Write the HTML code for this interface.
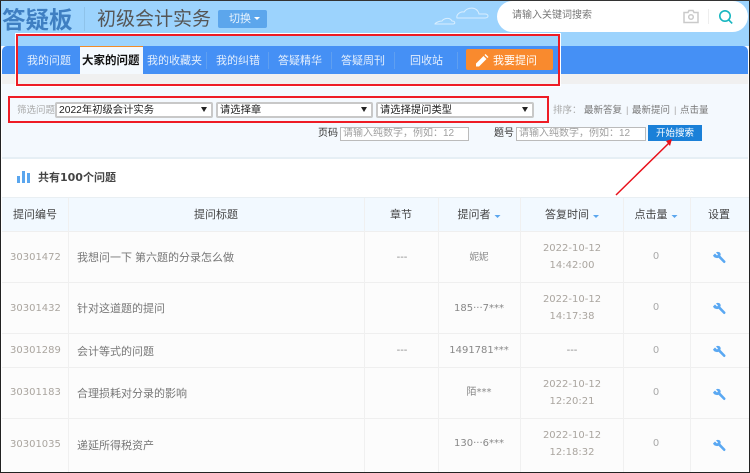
<!DOCTYPE html>
<html lang="zh"><head><meta charset="utf-8"><style>
*{box-sizing:border-box;margin:0;padding:0}
html,body{width:750px;height:473px;overflow:hidden;background:#fff}
body{position:relative;font-family:"Liberation Sans","Noto Sans CJK SC",sans-serif;font-size:11px;color:#555}
.a{position:absolute;white-space:nowrap}
.nav{top:53px;font-size:11px;color:#e4effd;line-height:16px}
.sep{position:absolute;top:52px;width:1px;height:17px;background:#5f9ff0}
.sel{position:absolute;top:102px;height:16px;background:#fff;border:2px solid #c8c8c8;border-radius:2px;color:#222;font-size:10.3px;line-height:13px;padding-left:2px;white-space:nowrap}
.sel i{position:absolute;right:4px;top:3px;width:0;height:0;border-left:3px solid transparent;border-right:3px solid transparent;border-top:5px solid #222}
.inp{position:absolute;top:127px;height:14px;background:#fff;border:1px solid #bbb;color:#a0a0a0;font-size:10px;line-height:12px;padding-left:2px;white-space:nowrap;overflow:hidden}
.hl{position:absolute;left:2px;width:747px;height:1px;background:#efefef}
.vl{position:absolute;top:198px;width:1px;height:274px;background:#f0f0f0}
.th{position:absolute;top:207px;font-size:11px;color:#444;line-height:16px;white-space:nowrap;text-align:center;transform:translateX(-50%)}
.th i{display:inline-block;width:0;height:0;border-left:3px solid transparent;border-right:3px solid transparent;border-top:3px solid #5aa6ee;margin-left:4px;vertical-align:0}
.id{left:10px;color:#aaa59f;font-family:"DejaVu Sans",sans-serif;font-size:10px;position:absolute;line-height:14px}
.tt{left:77px;color:#777;font-size:11px;position:absolute;line-height:16px;white-space:nowrap}
.m{position:absolute;color:#888;font-family:"DejaVu Sans","Noto Sans CJK SC",sans-serif;font-size:10px;line-height:14px;white-space:nowrap;text-align:center;transform:translateX(-50%)}
.d{position:absolute;left:572px;transform:translateX(-50%);color:#aaa59f;font-family:"DejaVu Sans",sans-serif;font-size:10px;line-height:17px;text-align:center;white-space:nowrap}
.z{position:absolute;left:656px;transform:translateX(-50%);color:#aaa;font-family:"DejaVu Sans",sans-serif;font-size:10px;line-height:14px}
.w{position:absolute;left:712px;width:14px;height:14px}
.s{position:absolute;top:104px;font-size:9.5px;line-height:14px;color:#777;white-space:nowrap}
</style></head><body>
<div class="a" style="left:0;top:0;width:750px;height:46px;background:#9cd3fd"></div>
<div class="a" style="left:2px;top:46px;width:746px;height:28px;background:#4590f5;border-radius:5px 5px 0 0"></div>
<div class="a" style="left:2px;top:74px;width:746px;height:10px;background:#f0f0f0"></div>
<div class="a" style="left:2px;top:84px;width:746px;height:73px;background:#f4f9fe"></div>
<div class="a" style="left:2px;top:157px;width:746px;height:2px;background:#e6eff5"></div>

<div class="a" style="left:2px;top:4px;font-size:23.5px;font-weight:bold;color:#3f7fc2;line-height:32px">答疑板</div>
<div class="a" style="left:84px;top:7px;width:1px;height:24px;background:#8fc3ea"></div>
<div class="a" style="left:97px;top:7px;font-size:19px;color:#555;line-height:26px">初级会计实务</div>
<div class="a" style="left:218px;top:10px;width:49px;height:18px;background:#5ca6ec;border-radius:2px;color:#e8f3fd;font-size:11px;line-height:18px;padding-left:11px">切换<span style="display:inline-block;width:0;height:0;border-left:3px solid transparent;border-right:3px solid transparent;border-top:3px solid #fff;margin-left:3px;vertical-align:2px"></span></div>

<svg class="a" style="left:430px;top:5px" width="90" height="24" viewBox="0 0 90 24" fill="none" stroke="#d8eefe" stroke-width="1"><path d="M27 13h28c4 0 4-4 0-4h-6c-2-8-12-7-15-2-4-1-8 3-7 6z"/><path d="M5 19h18c3 0 2-3-1-3-2-4-8-3-10 0-3 0-7 2-7 3z"/></svg>

<div class="a" style="left:497px;top:1px;width:251px;height:31px;background:#fff;border-radius:16px"></div>
<div class="a" style="left:512px;top:8px;font-size:10px;color:#777;line-height:16px">请输入关键词搜索</div>
<svg class="a" style="left:683px;top:9px" width="16" height="15" viewBox="0 0 16 15" fill="none" stroke="#cacaca" stroke-width="1.5"><path d="M1 3.500h4l1-2h4l1 2h4v10H1z"/><circle cx="8" cy="8" r="2.300"/></svg>
<div class="a" style="left:708px;top:9px;width:1px;height:15px;background:#eee"></div>
<svg class="a" style="left:718px;top:9px" width="16" height="16" viewBox="0 0 16 16" fill="none" stroke="#17b6c0" stroke-width="1.6"><circle cx="7" cy="7" r="5.200"/><path d="M10.800 11l3.400 3.400"/></svg>

<div class="a" style="left:80px;top:46px;width:63px;height:28px;background:#f4f9fe;border-top:1px solid #f28c28"></div>
<div class="a nav" style="left:27px">我的问题</div>
<div class="a nav" style="left:82px;color:#111;font-weight:bold;font-size:11.5px">大家的问题</div>
<div class="a nav" style="left:147px">我的收藏夹</div>
<div class="sep" style="left:206px"></div>
<div class="a nav" style="left:216px">我的纠错</div>
<div class="sep" style="left:268px"></div>
<div class="a nav" style="left:278px">答疑精华</div>
<div class="sep" style="left:331px"></div>
<div class="a nav" style="left:341px">答疑周刊</div>
<div class="sep" style="left:394px"></div>
<div class="a nav" style="left:410px">回收站</div>
<div class="sep" style="left:457px"></div>
<div class="a" style="left:466px;top:49px;width:87px;height:21px;background:#f98a2e;border-radius:2px"></div>
<svg class="a" style="left:475px;top:53px" width="14" height="14" viewBox="0 0 14 14" fill="#fff"><path d="M1 10.500L8.500 3l3 3L4 13.500H1zM9.500 2l1-1 3 3-1 1z"/></svg>
<div class="a" style="left:493px;top:53px;font-size:11px;color:#fff;line-height:16px">我要提问</div>

<div class="a" style="left:15px;top:33px;width:546px;height:54px;border:1px solid #fff"></div>
<div class="a" style="left:16px;top:34px;width:544px;height:52px;border:2px solid #ee1c25"></div>

<div class="a" style="left:8px;top:96px;width:541px;height:27px;border:2px solid #ee1c25"></div>
<div class="a" style="left:17px;top:104px;color:#aaa;font-size:9.500px;line-height:14px">筛选问题</div>
<div class="sel" style="left:55px;width:158px">2022年初级会计实务<i></i></div>
<div class="sel" style="left:216px;width:157px">请选择章<i></i></div>
<div class="sel" style="left:376px;width:158px">请选择提问类型<i></i></div>
<div class="s" style="left:553px;color:#aaa">排序：</div>
<div class="s" style="left:584px">最新答复</div>
<div class="s" style="left:626px;color:#aaa">|</div>
<div class="s" style="left:632px">最新提问</div>
<div class="s" style="left:674px;color:#aaa">|</div>
<div class="s" style="left:680px">点击量</div>
<div class="a" style="left:318px;top:126px;color:#333;font-size:10px;line-height:15px">页码</div>
<div class="inp" style="left:340px;width:129px">请输入纯数字，例如：12</div>
<div class="a" style="left:494px;top:126px;color:#333;font-size:10px;line-height:15px">题号</div>
<div class="inp" style="left:516px;width:130px">请输入纯数字，例如：12</div>
<div class="a" style="left:648px;top:125px;width:54px;height:16px;background:#1a80d8;color:#fff;font-size:9.500px;line-height:17px;text-align:center">开始搜索</div>

<svg class="a" style="left:610px;top:138px" width="70" height="62" viewBox="0 0 70 62" fill="none"><path d="M6 57L60 4" stroke="#e8101a" stroke-width="1.500"/><path d="M56 3l6-2-2 7z" fill="#e8101a"/></svg>

<div class="a" style="left:17px;top:176px;width:3px;height:7px;background:#5aa6ee"></div>
<div class="a" style="left:22px;top:171px;width:3px;height:12px;background:#5aa6ee"></div>
<div class="a" style="left:27px;top:173px;width:3px;height:10px;background:#5aa6ee"></div>
<div class="a" style="left:38px;top:170px;font-weight:bold;color:#444;font-family:'DejaVu Sans','Noto Sans CJK SC',sans-serif;font-size:11px;line-height:16px">共有100个问题</div>

<div class="a" style="left:2px;top:198px;width:747px;height:33px;background:#f2f9ff"></div>
<div class="a" style="left:2px;top:231px;width:747px;height:241px;background:#fcfcfc"></div>
<div class="hl" style="top:197px;background:#e9eff3"></div>
<div class="hl" style="top:231px"></div><div class="hl" style="top:282px"></div><div class="hl" style="top:333px"></div><div class="hl" style="top:367px"></div><div class="hl" style="top:418px"></div>
<div class="vl" style="left:68px"></div><div class="vl" style="left:364px"></div><div class="vl" style="left:438px"></div><div class="vl" style="left:520px"></div><div class="vl" style="left:623px"></div><div class="vl" style="left:690px"></div>

<div class="th" style="left:35px">提问编号</div>
<div class="th" style="left:216px">提问标题</div>
<div class="th" style="left:401px">章节</div>
<div class="th" style="left:479px">提问者<i></i></div>
<div class="th" style="left:572px">答复时间<i></i></div>
<div class="th" style="left:656px">点击量<i></i></div>
<div class="th" style="left:719px">设置</div>

<div class="id" style="top:251px">30301472</div><div class="tt" style="top:250px">我想问一下 第六题的分录怎么做</div>
<div class="m" style="left:402px;top:251px">---</div><div class="m" style="left:479px;top:251px;font-size:9.500px">妮妮</div>
<div class="d" style="top:240px">2022-10-12<br>14:42:00</div><div class="z" style="top:250px">0</div>

<div class="id" style="top:302px">30301432</div><div class="tt" style="top:301px">针对这道题的提问</div>
<div class="m" style="left:479px;top:302px">185···7***</div>
<div class="d" style="top:291px">2022-10-12<br>14:17:38</div><div class="z" style="top:301px">0</div>

<div class="id" style="top:344px">30301289</div><div class="tt" style="top:344px">会计等式的问题</div>
<div class="m" style="left:402px;top:344px">---</div><div class="m" style="left:479px;top:344px">1491781***</div>
<div class="m" style="left:572px;top:344px">---</div><div class="z" style="top:344px">0</div>

<div class="id" style="top:386px">30301183</div><div class="tt" style="top:386px">合理损耗对分录的影响</div>
<div class="m" style="left:479px;top:386px">陌***</div>
<div class="d" style="top:376px">2022-10-12<br>12:20:21</div><div class="z" style="top:386px">0</div>

<div class="id" style="top:438px">30301035</div><div class="tt" style="top:438px">递延所得税资产</div>
<div class="m" style="left:479px;top:437px">130···6***</div>
<div class="d" style="top:427px">2022-10-12<br>12:18:32</div><div class="z" style="top:437px">0</div>

<svg class="w" style="top:251px" viewBox="0 0 14 14"><path d="M1 4.500L3 2.500l2 2 1-1-2-2C5.500.3 8 .8 8.500 2.500c.3 1 .2 1.700-.2 2.300l5 5.200c.8 1-.8 2.800-1.800 1.800l-5-5C5 7.500 2 7 1 4.500z" fill="#5aa8f2"/></svg>
<svg class="w" style="top:302px" viewBox="0 0 14 14"><path d="M1 4.500L3 2.500l2 2 1-1-2-2C5.500.3 8 .8 8.500 2.500c.3 1 .2 1.700-.2 2.300l5 5.200c.8 1-.8 2.800-1.800 1.800l-5-5C5 7.500 2 7 1 4.500z" fill="#5aa8f2"/></svg>
<svg class="w" style="top:345px" viewBox="0 0 14 14"><path d="M1 4.500L3 2.500l2 2 1-1-2-2C5.500.3 8 .8 8.500 2.500c.3 1 .2 1.700-.2 2.300l5 5.200c.8 1-.8 2.800-1.800 1.800l-5-5C5 7.500 2 7 1 4.500z" fill="#5aa8f2"/></svg>
<svg class="w" style="top:388px" viewBox="0 0 14 14"><path d="M1 4.500L3 2.500l2 2 1-1-2-2C5.500.3 8 .8 8.500 2.500c.3 1 .2 1.700-.2 2.300l5 5.200c.8 1-.8 2.800-1.800 1.800l-5-5C5 7.500 2 7 1 4.500z" fill="#5aa8f2"/></svg>
<svg class="w" style="top:439px" viewBox="0 0 14 14"><path d="M1 4.500L3 2.500l2 2 1-1-2-2C5.500.3 8 .8 8.500 2.500c.3 1 .2 1.700-.2 2.300l5 5.200c.8 1-.8 2.800-1.800 1.800l-5-5C5 7.500 2 7 1 4.500z" fill="#5aa8f2"/></svg>

<div class="a" style="left:0;top:0;width:1px;height:473px;background:#222"></div>
<div class="a" style="left:749px;top:0;width:1px;height:473px;background:#222"></div>
<div class="a" style="left:0;top:472px;width:750px;height:1px;background:#222"></div>
<div class="a" style="left:0;top:0;width:750px;height:1px;background:#333"></div>
</body></html>
